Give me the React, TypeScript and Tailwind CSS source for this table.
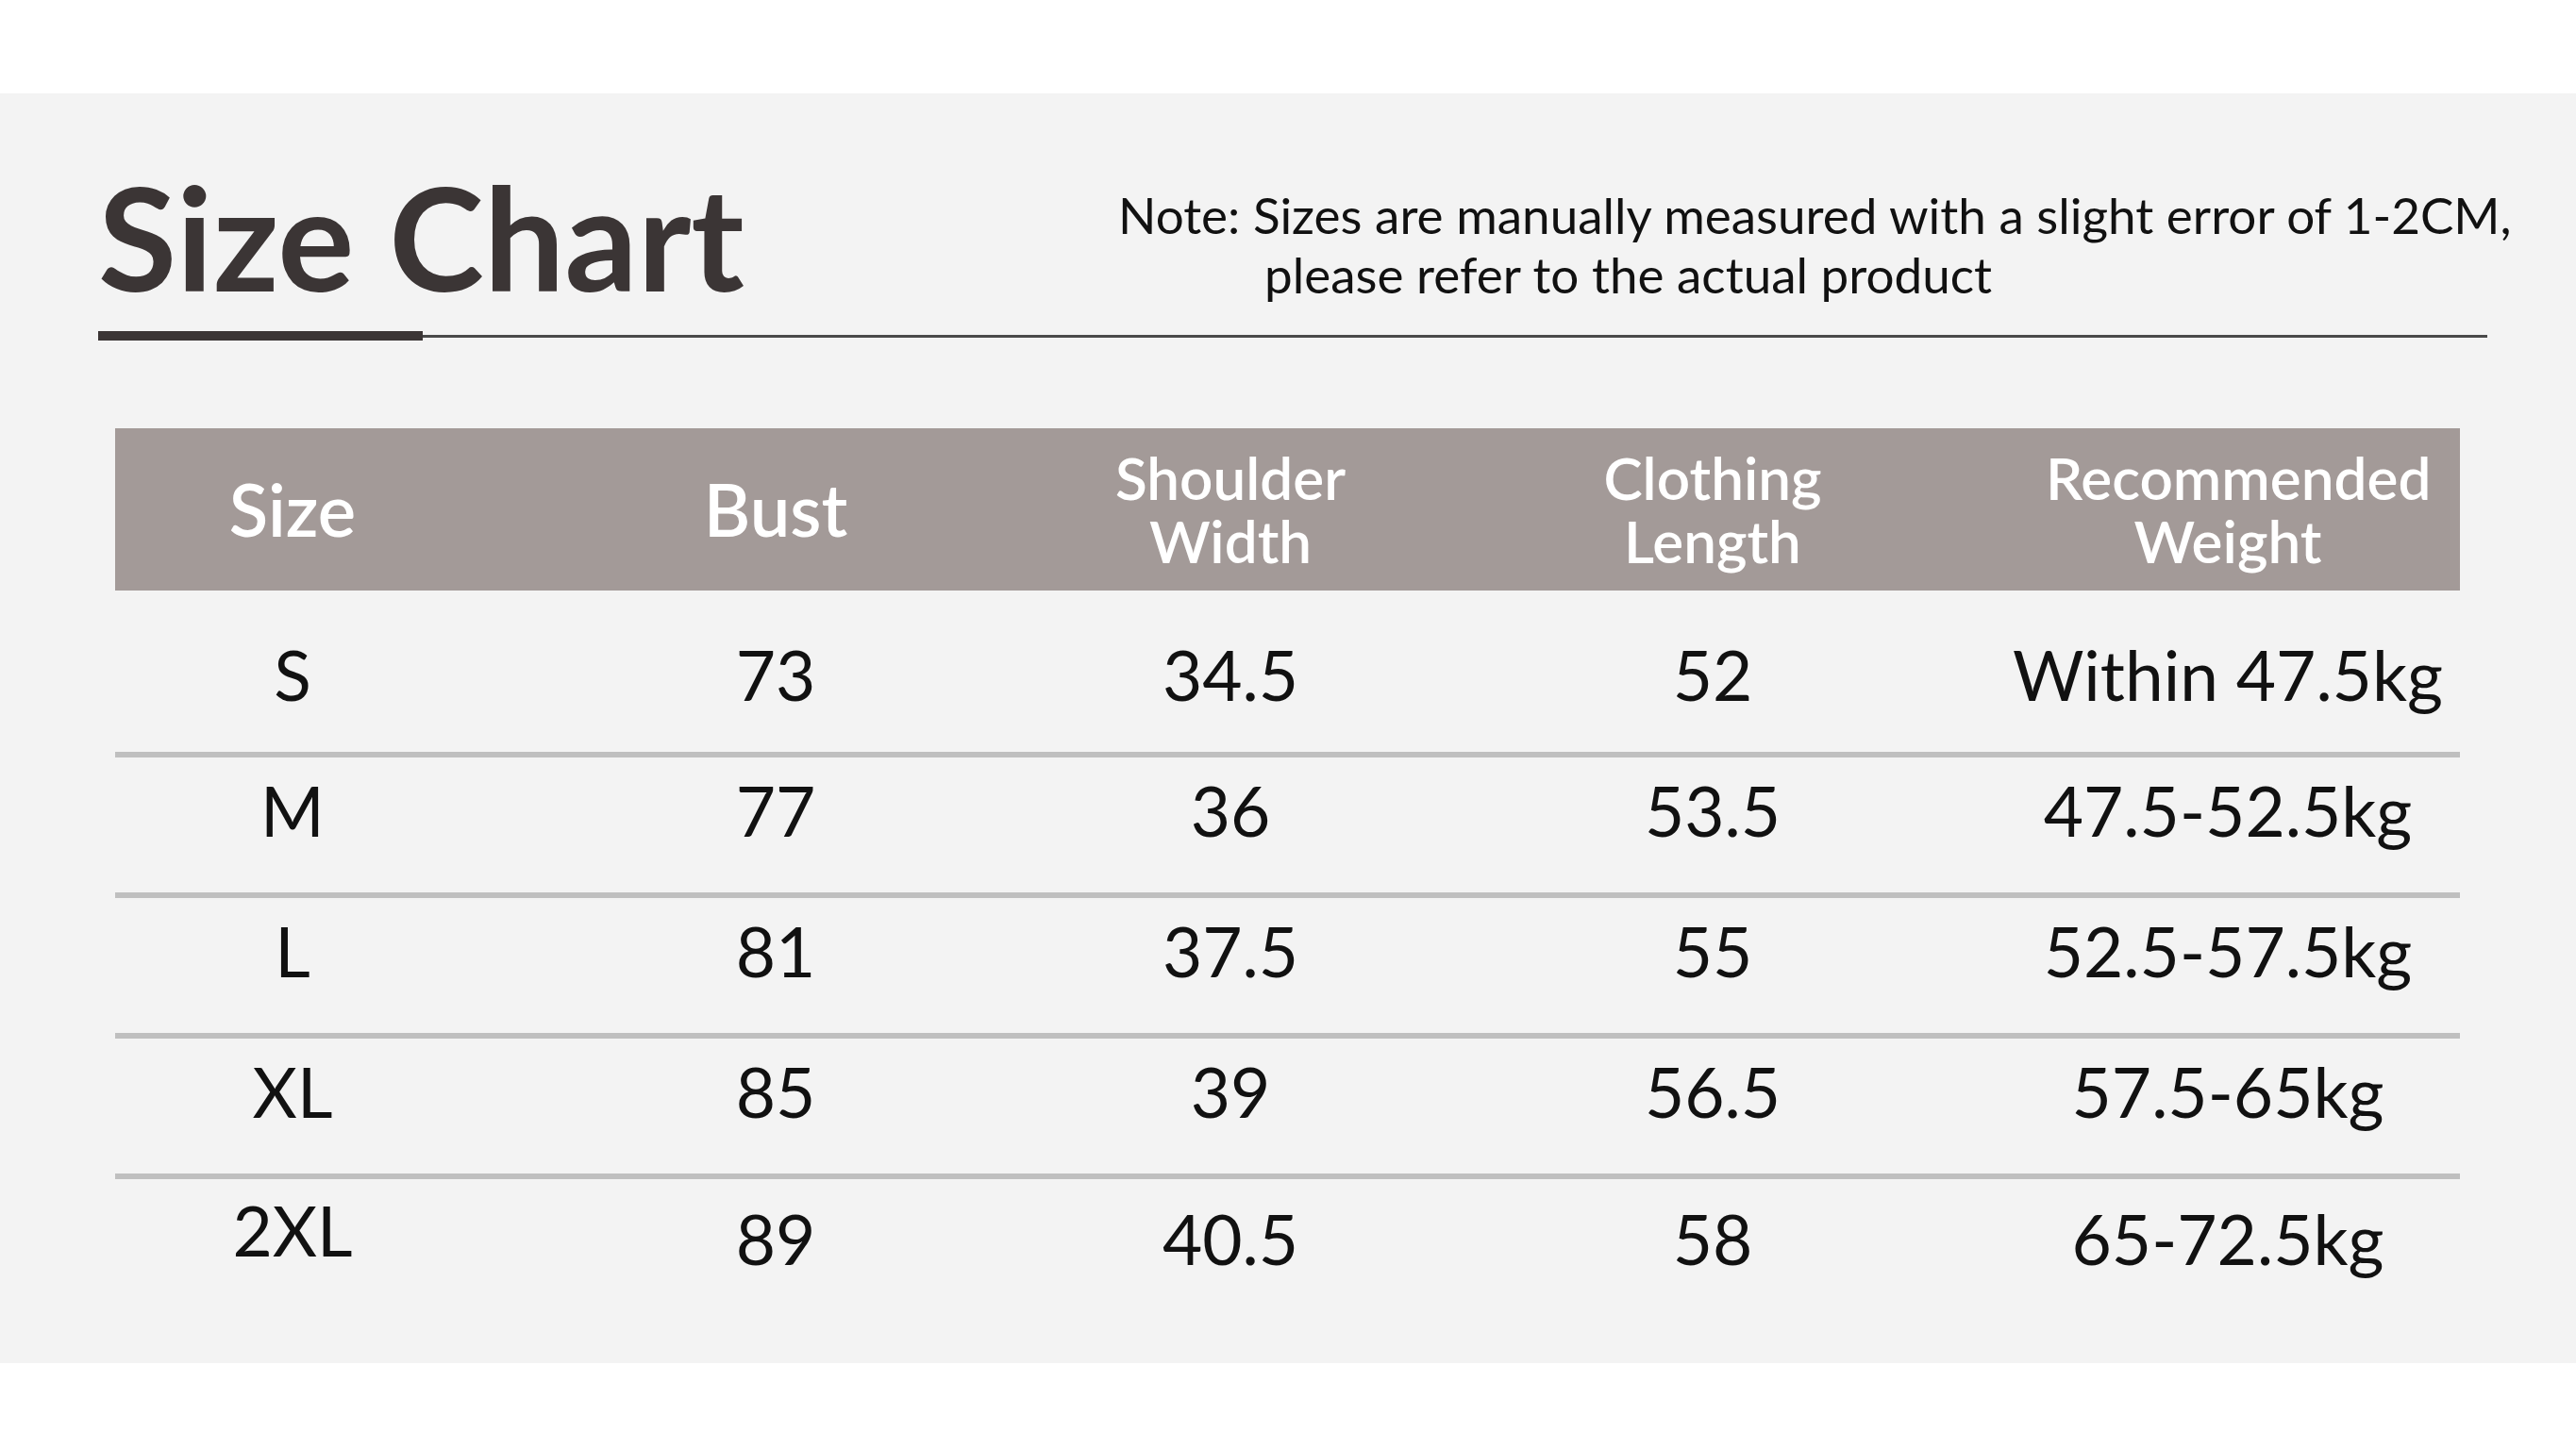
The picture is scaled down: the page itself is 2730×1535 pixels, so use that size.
const headers = [
  { lines: ["Size"] },
  { lines: ["Bust"] },
  { lines: ["Shoulder", "Width"] },
  { lines: ["Clothing", "Length"] },
  { lines: ["Recommended", "Weight"] },
]

const rows = [
  ["S", "73", "34.5", "52", "Within 47.5kg"],
  ["M", "77", "36", "53.5", "47.5-52.5kg"],
  ["L", "81", "37.5", "55", "52.5-57.5kg"],
  ["XL", "85", "39", "56.5", "57.5-65kg"],
  ["2XL", "89", "40.5", "58", "65-72.5kg"],
]

const cols = "grid grid-cols-[376px_648px_316px_706px_386px]"

const App = () => {
  return (
    <div className="w-full h-[1535px] bg-white overflow-hidden font-['Lato','Liberation_Sans',sans-serif]">
      <div className="h-[99px]" />
      <section className="h-[1346px] bg-[#f3f3f3] flex flex-col">
        {/* Title + note */}
        <div className="flex items-start pt-[75px] pl-[104px]">
          <h1 className="text-[152px] leading-none font-bold text-[#3b3535]">Size Chart</h1>
          <div className="ml-auto mr-[77px] mt-[22px] w-[1468px] text-[53px] leading-[63px] text-[#111] whitespace-nowrap">
            <p>Note: Sizes are manually measured with a slight error of 1-2CM,</p>
            <p className="pl-[155px]">please refer to the actual product</p>
          </div>
        </div>
        <div className="flex items-center ml-[104px] mr-[94px] mt-[25px]">
          <div className="w-[344px] h-[10px] bg-[#3b3535]" />
          <div className="flex-1 h-[3px] bg-[#4a4a4a]" />
        </div>

        {/* Table */}
        <div className="ml-[122px] w-[2485px] mt-[93px]">
          <div className={`${cols} h-[172px] bg-[#a39a98] text-white items-center text-center`}>
            {headers.map((h) =>
              h.lines.length === 1 ? (
                <div key={h.lines[0]} className="text-[76px] leading-none font-semibold">
                  {h.lines[0]}
                </div>
              ) : (
                <div key={h.lines[0]} className="text-[62px] leading-[67px] font-semibold">
                  {h.lines.map((l) => (
                    <div key={l}>{l}</div>
                  ))}
                </div>
              )
            )}
          </div>
          {rows.map((r, i) => (
            <div key={r[0]}>
              <div
                className={`${cols} items-center text-[73px] leading-none text-[#111] whitespace-nowrap ${
                  i === 0 ? "h-[171px] pt-[8px]" : i === rows.length - 1 ? "h-[126px]" : "h-[143px] pb-[30px]"
                }`}
              >
                {r.map((c, j) => (
                  <div key={j} className={`flex justify-center ${j === 0 && r[0] === "2XL" ? "-mt-[18px]" : ""}`}>
                    <span>{c}</span>
                  </div>
                ))}
              </div>
              {i < rows.length - 1 && <div className="h-[6px] bg-[#bfbfbf]" />}
            </div>
          ))}
        </div>
      </section>
    </div>
  )
}

export default App
